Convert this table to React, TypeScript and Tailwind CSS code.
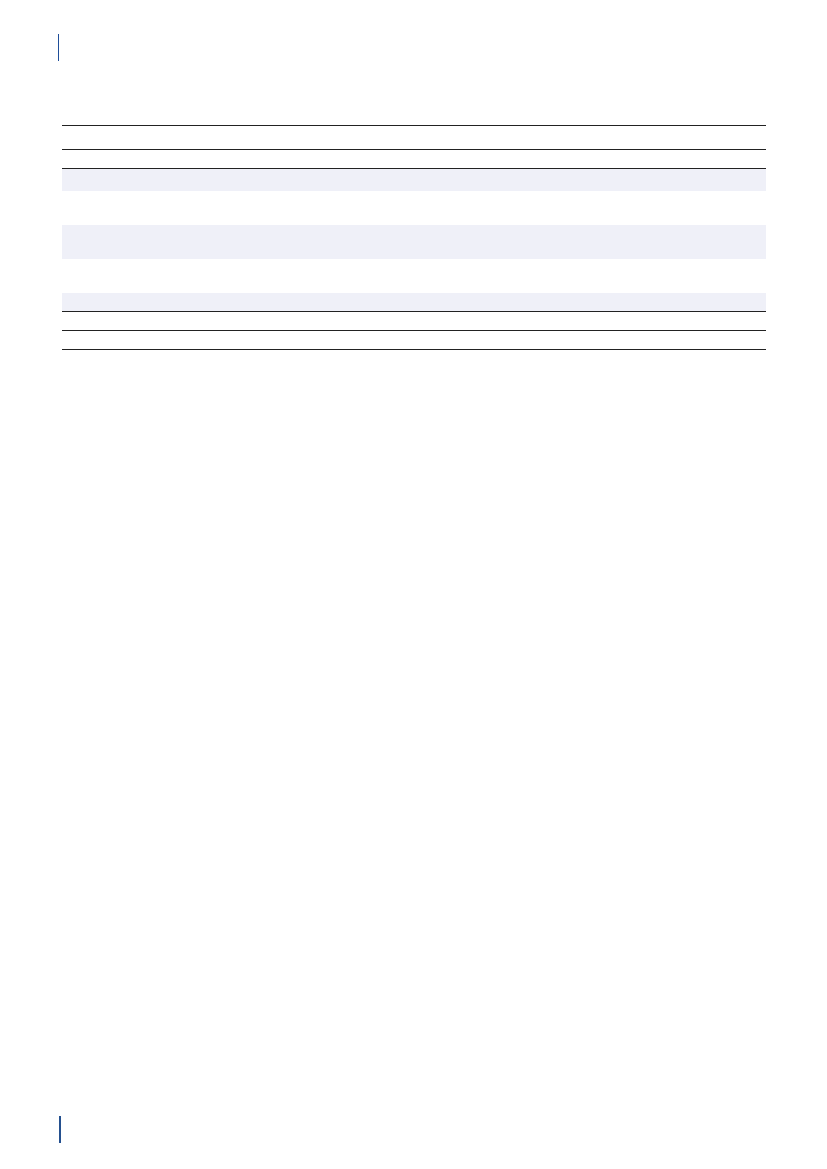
const cols = 'grid grid-cols-[231px_151px_108px_54px_106px_54px]';

type Row = { h: string; shade?: boolean; line?: boolean };

const rows: Row[] = [
  { h: 'h-[23px]', line: true },
  { h: 'h-[18px]', line: true },
  { h: 'h-[22px]', shade: true },
  { h: 'h-[34px]' },
  { h: 'h-[34px]', shade: true },
  { h: 'h-[34px]' },
  { h: 'h-[18px]', shade: true, line: true },
  { h: 'h-[18px]', line: true },
  { h: 'h-[18px]', line: true },
];

function TableRow({ row }: { row: Row }) {
  return (
    <div
      className={`${cols} ${row.h} ${row.shade ? 'bg-[#eff0f8]' : 'bg-white'} ${
        row.line ? 'border-b border-[#222222]' : ''
      } box-content`}
    >
      {Array.from({ length: 6 }).map((_, i) => (
        <div key={i} />
      ))}
    </div>
  );
}

export default function App() {
  return (
    <div className="flex h-[1169px] w-[827px] flex-col bg-white pt-[34px] pb-[26px] font-['Liberation_Sans',sans-serif]">
      <div className="ml-[58px] h-[27px] w-px bg-[#1f4e99]" />

      <div className="mt-[64px] ml-[62px] w-[704px] border-t border-[#222222]">
        {rows.map((row, i) => (
          <TableRow key={i} row={row} />
        ))}
      </div>

      <div className="mt-auto ml-[59px] h-[27px] w-[2px] bg-[#24508f]" />
    </div>
  );
}
